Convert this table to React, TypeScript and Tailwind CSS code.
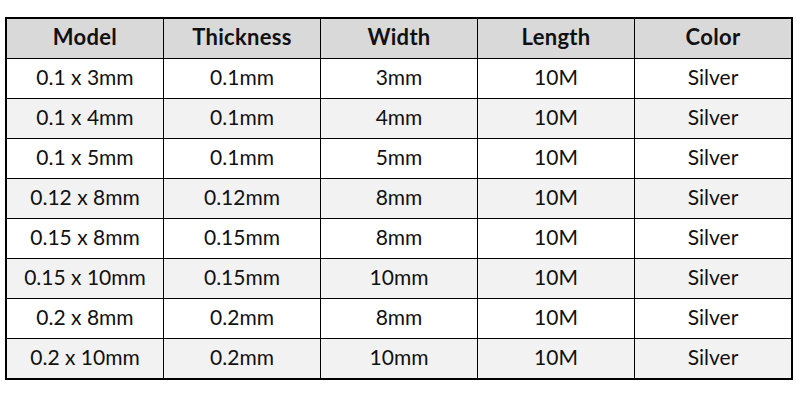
const rows = [
  ['0.1 x 3mm', '0.1mm', '3mm', '10M', 'Silver'],
  ['0.1 x 4mm', '0.1mm', '4mm', '10M', 'Silver'],
  ['0.1 x 5mm', '0.1mm', '5mm', '10M', 'Silver'],
  ['0.12 x 8mm', '0.12mm', '8mm', '10M', 'Silver'],
  ['0.15 x 8mm', '0.15mm', '8mm', '10M', 'Silver'],
  ['0.15 x 10mm', '0.15mm', '10mm', '10M', 'Silver'],
  ['0.2 x 8mm', '0.2mm', '8mm', '10M', 'Silver'],
  ['0.2 x 10mm', '0.2mm', '10mm', '10M', 'Silver'],
];

const headers = ['Model', 'Thickness', 'Width', 'Length', 'Color'];

export default function App() {
  return (
    <div className="w-[800px] h-[404px] bg-white pt-[17px] pl-[5px] text-[#111] font-['Lato','Open_Sans',sans-serif]">
      <div className="w-[788px] border-2 border-black">
        <div className="flex h-[39px] bg-[#d9d9d9] text-[22px] font-bold tracking-[0.3px]">
          {headers.map((h, i) => (
            <div
              key={h}
              className={
                i === 0
                  ? 'w-[156px] flex items-center justify-center pb-[4px]'
                  : 'w-[157px] flex items-center justify-center pb-[4px] border-l border-black'
              }
            >
              {h}
            </div>
          ))}
        </div>
        {rows.map((r, ri) => (
          <div
            key={ri}
            className={
              ri % 2 === 1
                ? 'flex h-[40px] border-t border-black bg-[#f2f2f2] text-[21px]'
                : 'flex h-[40px] border-t border-black bg-white text-[21px]'
            }
          >
            {r.map((c, i) => (
              <div
                key={i}
                className={
                  i === 0
                    ? 'w-[156px] flex items-center justify-center pb-[3px]'
                    : 'w-[157px] flex items-center justify-center pb-[3px] border-l border-black'
                }
              >
                {c}
              </div>
            ))}
          </div>
        ))}
      </div>
    </div>
  );
}
